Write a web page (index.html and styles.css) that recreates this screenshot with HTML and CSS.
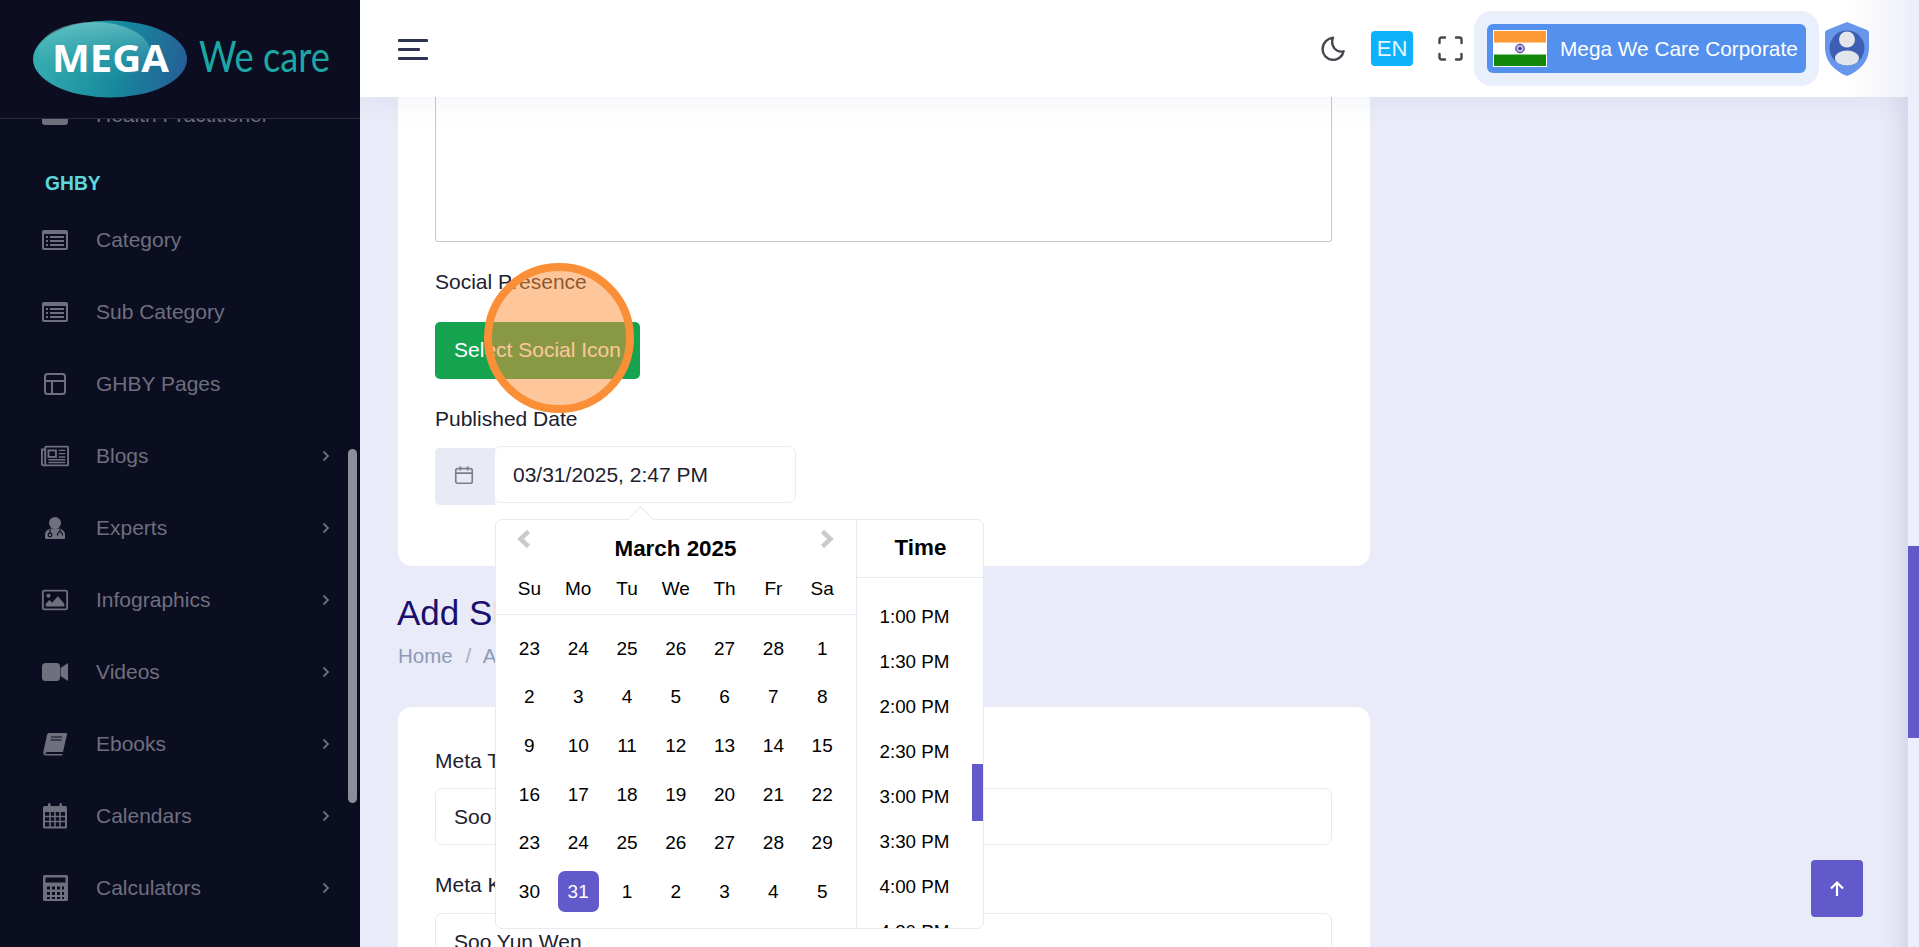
FILE: index.html
```html
<!DOCTYPE html>
<html lang="en">
<head>
<meta charset="utf-8">
<title>Mega We Care</title>
<link rel="stylesheet" href="styles.css">
</head>
<body>
<div class="shell">
  <aside class="sidebar">
    <div class="brand">
      <svg class="logo" viewBox="0 0 362 119" width="362" height="119">
        <defs>
          <linearGradient id="egg" x1="0" y1=".45" x2="1" y2=".55">
            <stop offset="0" stop-color="#35aeb1"/>
            <stop offset=".55" stop-color="#178a9d"/>
            <stop offset="1" stop-color="#255f97"/>
          </linearGradient>
          <linearGradient id="shine" x1="0" y1="0" x2="0" y2="1">
            <stop offset="0" stop-color="#79cdcc" stop-opacity=".7"/>
            <stop offset="1" stop-color="#2aa0ac" stop-opacity=".05"/>
          </linearGradient>
        </defs>
        <ellipse cx="110" cy="59" rx="77" ry="38.500" fill="url(#egg)"/>
        <ellipse cx="94" cy="52" rx="56" ry="30" fill="url(#shine)"/>
        <text x="52" y="72" class="logo-mega" textLength="117" lengthAdjust="spacingAndGlyphs">MEGA</text>
        <text x="199" y="72" class="logo-care" textLength="131" lengthAdjust="spacingAndGlyphs">We care</text>
      </svg>
    </div>
    <nav class="nav">
      <a class="nav-item"><span class="nav-icon"><svg viewBox="0 0 28 22" width="28" height="22"><rect x="1" y="2" width="26" height="19" rx="3" class="fill"/></svg></span>Health Practitioner</a>
      <div class="nav-heading">GHBY</div>
      <a class="nav-item"><span class="nav-icon"><svg viewBox="0 0 28 22" width="28" height="22"><rect x="1" y="1" width="26" height="20" rx="2" class="fill"/><rect x="3" y="5" width="22" height="14" class="cut"/><path d="M5 8h2M5 12h2M5 16h2M9 8h14M9 12h14M9 16h14" class="line"/></svg></span>Category</a>
      <a class="nav-item"><span class="nav-icon"><svg viewBox="0 0 28 22" width="28" height="22"><rect x="1" y="1" width="26" height="20" rx="2" class="fill"/><rect x="3" y="5" width="22" height="14" class="cut"/><path d="M5 8h2M5 12h2M5 16h2M9 8h14M9 12h14M9 16h14" class="line"/></svg></span>Sub Category</a>
      <a class="nav-item"><span class="nav-icon"><svg viewBox="0 0 28 24" width="28" height="24"><rect x="4" y="2" width="20" height="20" rx="2.500" class="outline"/><path d="M4 9h20M11 9v13" class="outline"/></svg></span>GHBY Pages</a>
      <a class="nav-item"><span class="nav-icon"><svg viewBox="0 0 30 22" width="30" height="22"><rect x="4.500" y="1" width="24.500" height="20" rx="1" class="outline"/><path d="M4.500 4H1v16l1 1h3" class="outline"/><rect x="8" y="5" width="8" height="7" class="outline"/><path d="M19 5h7M19 8.500h7M19 12h7M8 15h18M8 18h18" class="thin"/></svg></span>Blogs<svg class="chev" viewBox="0 0 8 12" width="8" height="12"><path d="M1.500 1.500 6 6l-4.500 4.500"/></svg></a>
      <a class="nav-item"><span class="nav-icon"><svg viewBox="0 0 28 24" width="28" height="24"><circle cx="14" cy="7" r="6" class="fill"/><path d="M4 22v-3c0-4 3-6 6-6.500h8c3 .5 6 2.500 6 6.500v3q0 1-1 1H5q-1 0-1-1Z" class="fill"/><circle cx="9" cy="19" r="1.800" class="dark-ring"/><path d="M9 13v4M19 13v2.500c2 .5 2.500 2 2.500 4M16.500 19.500c0-2 .5-3.500 2.500-4" class="dark-line"/></svg></span>Experts<svg class="chev" viewBox="0 0 8 12" width="8" height="12"><path d="M1.500 1.500 6 6l-4.500 4.500"/></svg></a>
      <a class="nav-item"><span class="nav-icon"><svg viewBox="0 0 30 24" width="30" height="24"><rect x="2" y="2" width="26" height="20" rx="1.500" class="outline"/><circle cx="8" cy="7.500" r="2.200" class="fill"/><path d="M5 19v-3l4-4 3 3 6-7 7 8v3Z" class="fill"/></svg></span>Infographics<svg class="chev" viewBox="0 0 8 12" width="8" height="12"><path d="M1.500 1.500 6 6l-4.500 4.500"/></svg></a>
      <a class="nav-item"><span class="nav-icon"><svg viewBox="0 0 28 20" width="28" height="20"><rect x="1" y="1" width="18" height="18" rx="3.500" class="fill"/><path d="M19.500 6 27 1v18l-7.500-5Z" class="fill"/></svg></span>Videos<svg class="chev" viewBox="0 0 8 12" width="8" height="12"><path d="M1.500 1.500 6 6l-4.500 4.500"/></svg></a>
      <a class="nav-item"><span class="nav-icon"><svg viewBox="0 0 28 24" width="28" height="24"><path d="M8 1h17q1.500 0 1 1.500L22 20H7q-3 0-2.500 2h17l-.4 1.500H5Q1.500 23.500 2.500 19L6 3q.4-2 2-2Z" class="fill"/><path d="M10 5h11M9.500 8h11" class="dark-line"/></svg></span>Ebooks<svg class="chev" viewBox="0 0 8 12" width="8" height="12"><path d="M1.500 1.500 6 6l-4.500 4.500"/></svg></a>
      <a class="nav-item"><span class="nav-icon"><svg viewBox="0 0 28 26" width="28" height="26"><rect x="2" y="3" width="24" height="22.500" rx="1.500" class="fill"/><rect x="7" y="0" width="2.500" height="6" rx="1.200" class="fill"/><rect x="18.500" y="0" width="2.500" height="6" rx="1.200" class="fill"/><path d="M4 9h20v14.500H4Z" class="cut"/><path d="M4 13.500h20M4 18.500h20M9 9v15M14 9v15M19 9v15" class="fill-line"/></svg></span>Calendars<svg class="chev" viewBox="0 0 8 12" width="8" height="12"><path d="M1.500 1.500 6 6l-4.500 4.500"/></svg></a>
      <a class="nav-item"><span class="nav-icon"><svg viewBox="0 0 28 26" width="28" height="26"><rect x="2" y="0" width="25" height="26" rx="1.500" class="fill"/><rect x="4.500" y="2.500" width="20" height="5" class="cut"/><path d="M6 11.500h3v3H6ZM11 11.500h3v3h-3ZM16 11.500h3v3h-3ZM21 11.500h2v3h-2ZM6 17h3v3H6ZM11 17h3v3h-3ZM16 17h3v3h-3ZM21 17h2v3h-2ZM6 22h3v2H6ZM11 22h3v2h-3ZM16 22h3v2h-3ZM21 22h2v2h-2Z" class="cut"/></svg></span>Calculators<svg class="chev" viewBox="0 0 8 12" width="8" height="12"><path d="M1.500 1.500 6 6l-4.500 4.500"/></svg></a>
    </nav>
    <div class="side-thumb"></div>
  </aside>

  <main class="main">
    <header class="topbar">
      <div class="burger"><span></span><span class="short"></span><span></span></div>
      <div class="tools">
        <svg class="tool-icon" viewBox="0 0 25 25" width="25" height="25"><path d="M12 1.600C7 2.400 1.600 6.500 1.600 13a10.600 10.600 0 0 0 21 2.300 9 9 0 0 1-10.800-6C10.900 6.700 11 4 12 1.600Z"/></svg>
        <span class="lang">EN</span>
        <svg class="tool-icon screen" viewBox="0 0 25 25" width="25" height="25"><path d="M1.500 7V3.500a2 2 0 0 1 2-2H7M18 1.500h3.500a2 2 0 0 1 2 2V7M23.500 18v3.500a2 2 0 0 1-2 2H18M7 23.500H3.500a2 2 0 0 1-2-2V18"/></svg>
        <div class="org-pill">
          <div class="org-btn">
            <svg class="flag" viewBox="0 0 54 37" width="54" height="37"><rect width="54" height="37" fill="#fff"/><rect x="1" y="1" width="52" height="11.500" fill="#ff9933"/><rect x="1" y="24.500" width="52" height="11.500" fill="#138808"/><circle cx="27" cy="18.500" r="4.300" fill="#b9b6e3" stroke="#2e2a80" stroke-width="1"/><circle cx="27" cy="18.500" r="1.500" fill="#2e2a80"/></svg>
            <span>Mega We Care Corporate</span>
          </div>
        </div>
        <svg class="shield" viewBox="0 0 44 54" width="44" height="54"><path d="M22 0 42 8c2 1 2 2 2 4v14c0 13-9 23-22 28C9 49 0 39 0 26V12c0-2 0-3 2-4Z" fill="#6797ec"/><circle cx="22" cy="26" r="17.500" fill="#3e5eb3"/><circle cx="22" cy="17.500" r="8" fill="#e2e5ea"/><ellipse cx="22" cy="36" rx="12" ry="7.500" fill="#e2e5ea"/></svg>
      </div>
    </header>

    <div class="content">
      <section class="card card-top">
        <div class="textarea"></div>
        <label class="label label-social">Social Presence</label>
        <button class="btn-green">Select Social Icon</button>
        <label class="label label-date">Published Date</label>
        <div class="date-group">
          <span class="addon"><svg viewBox="0 0 24 24" width="22" height="22"><rect x="3" y="5" width="18" height="16" rx="2"/><path d="M8 2.500V7M16 2.500V7M3 10h18"/></svg></span>
          <span class="date-input">03/31/2025, 2:47 PM</span>
        </div>
      </section>

      <h1 class="page-title">Add SEO</h1>
      <div class="crumbs">Home <span class="sep">/</span> Add SEO</div>

      <section class="card card-meta">
        <label class="label">Meta Title</label>
        <div class="field">Soo Yun Wen</div>
        <label class="label label-next">Meta Keywords</label>
        <div class="field field-next">Soo Yun Wen</div>
      </section>
    </div>

    <div class="picker">
      <div class="picker-arrow"></div>
      <div class="month">
        <div class="month-head">
          <svg class="arrow" viewBox="0 0 15 20" width="15" height="20"><path d="M12.500 2.500 4.500 10l8 7.500"/></svg>
          <span>March 2025</span>
          <svg class="arrow" viewBox="0 0 15 20" width="15" height="20"><path d="M2.500 2.500 10.500 10l-8 7.500"/></svg>
        </div>
        <div class="week-names"><span>Su</span><span>Mo</span><span>Tu</span><span>We</span><span>Th</span><span>Fr</span><span>Sa</span></div>
        <div class="days">
          <span>23</span><span>24</span><span>25</span><span>26</span><span>27</span><span>28</span><span>1</span>
          <span>2</span><span>3</span><span>4</span><span>5</span><span>6</span><span>7</span><span>8</span>
          <span>9</span><span>10</span><span>11</span><span>12</span><span>13</span><span>14</span><span>15</span>
          <span>16</span><span>17</span><span>18</span><span>19</span><span>20</span><span>21</span><span>22</span>
          <span>23</span><span>24</span><span>25</span><span>26</span><span>27</span><span>28</span><span>29</span>
          <span>30</span><span class="sel"><b>31</b></span><span>1</span><span>2</span><span>3</span><span>4</span><span>5</span>
        </div>
      </div>
      <div class="time">
        <div class="time-head">Time</div>
        <div class="time-body">
          <div class="time-list">
            <span>1:00 PM</span><span>1:30 PM</span><span>2:00 PM</span><span>2:30 PM</span><span>3:00 PM</span><span>3:30 PM</span><span>4:00 PM</span><span>4:30 PM</span>
          </div>
          <div class="time-track"><div class="time-thumb"></div></div>
        </div>
      </div>
    </div>

    <div class="click-ring"></div>
    <a class="to-top"><svg viewBox="0 0 20 20" width="20" height="20"><path d="M10 17V4M4 9.500 10 3.500l6 6"/></svg></a>
  </main>

  <div class="page-track"><div class="page-thumb"></div></div>
</div>
</body>
</html>
```
FILE: styles.css
```css
* { box-sizing: border-box; }
html, body { margin: 0; height: 100%; overflow: hidden; }
body { font-family: "Liberation Sans", Arial, sans-serif; color: #1d212f; background: #e9ebf8; }
.shell { display: grid; grid-template-columns: 360px 1fr 11px; height: 100vh; }

/* sidebar */
.sidebar { position: relative; background: #0b0d21; overflow: hidden; color: #6f6f7e; }
.brand { position: absolute; top: 0; left: 0; z-index: 2; width: 362px; height: 119px; background: #0c0d20; border-bottom: 1px solid #2b2c3c; }
.logo { display: block; }
.logo-mega { font-family: "Open Sans", sans-serif; font-weight: 700; font-size: 37px; fill: #fff; }
.logo-care { font-family: Lato, sans-serif; font-weight: 400; font-size: 42px; fill: #1ba8a4; }
.nav { padding-top: 79px; }
.nav-item { display: flex; align-items: center; height: 72px; padding: 0 30px 0 41px; font-size: 21px; color: #6f6f7e; }
.nav-icon { display: flex; justify-content: center; width: 28px; margin-right: 27px; flex: none; }
.nav-heading { padding: 21px 0 8px 45px; font-size: 19.300px; line-height: 24px; font-weight: 700; color: #5cd8dc; }
.chev { margin-left: auto; fill: none; stroke: #6f6f7e; stroke-width: 1.800; }
.fill { fill: #6f6f7e; }
.cut { fill: #0b0d21; }
.line { stroke: #6f6f7e; stroke-width: 2; fill: none; }
.fill-line { stroke: #6f6f7e; stroke-width: 1.500; fill: none; }
.outline { stroke: #6f6f7e; stroke-width: 2; fill: none; }
.thin { stroke: #6f6f7e; stroke-width: 1.500; fill: none; }
.dark-line { stroke: #0b0d21; stroke-width: 1.200; fill: none; }
.dark-ring { stroke: #0b0d21; stroke-width: 1.200; fill: none; }
.side-thumb { position: absolute; left: 348px; top: 449px; width: 9px; height: 354px; border-radius: 5px; background: #8d8d97; }

/* main */
.main { position: relative; overflow: hidden; background: #e9ebf8; box-shadow: inset -22px 0 18px -14px rgba(60, 65, 120, .12); }
.topbar { position: relative; z-index: 1; display: flex; align-items: center; height: 97px; padding: 0 39px 0 38px; background: linear-gradient(90deg, #fff 96%, #f0f1f8 100%); box-shadow: 0 6px 26px rgba(90, 95, 150, .07); }
.burger { display: flex; flex-direction: column; gap: 6px; width: 30px; margin-top: 1px; }
.burger span { display: block; height: 3px; background: #2d3352; border-radius: 1px; }
.burger .short { width: 22px; }
.tools { display: flex; align-items: center; margin-left: auto; }
.tool-icon { fill: none; stroke: #45454d; stroke-width: 2.400; stroke-linecap: round; stroke-linejoin: round; }
.tool-icon.screen { stroke-width: 2.400; margin-right: 11px; }
.lang { display: flex; align-items: center; justify-content: center; width: 42px; height: 35px; margin: 0 25px; border-radius: 4px; background: #0db2fb; color: #e4f6ff; font-size: 22px; }
.org-pill { display: flex; align-items: center; justify-content: center; width: 345px; height: 75px; border-radius: 18px; background: #eaf0fb; }
.org-btn { display: flex; align-items: center; gap: 13px; width: 319px; height: 49px; padding-left: 6px; border-radius: 6px; background: #5490ee; color: #fff; font-size: 20.800px; white-space: nowrap; }
.flag { flex: none; }
.shield { margin-left: 6px; flex: none; }

/* content */
.content { width: 972px; margin-left: 38px; }
.card { background: #fff; border-radius: 14px; padding-left: 37px; padding-right: 38px; }
.card-top { height: 469px; border-radius: 0 0 14px 14px; }
.textarea { height: 145px; border: 1px solid #c6c8cf; border-top: 0; border-radius: 0 0 3px 3px; }
.label { display: block; font-size: 21px; line-height: 24px; color: #1d212f; }
.label-social { margin-top: 28px; }
.btn-green { display: block; width: 205px; height: 57px; margin-top: 28px; padding: 0 0 2px; border: 0; border-radius: 5px; background: #16a34f; color: #fff; font: 21px "Liberation Sans", Arial, sans-serif; }
.label-date { margin-top: 28px; }
.date-group { display: flex; align-items: flex-start; margin-top: 15px; }
.addon { display: flex; align-items: center; justify-content: center; width: 60px; height: 57px; margin-top: 2px; padding: 0 2px 4px 0; border-radius: 5px 0 0 5px; background: #e8eaf6; }
.addon svg { fill: none; stroke: #7d7e8c; stroke-width: 1.800; }
.date-input { display: flex; align-items: center; width: 302px; height: 57px; margin-left: -1px; padding-left: 18px; border: 1px solid #eaebf5; border-radius: 7px; background: #fff; font-size: 21px; }
.page-title { margin: 26px 0 0 -1px; font-size: 35px; line-height: 42px; font-weight: 400; color: #1a0f6e; }
.crumbs { margin-top: 10px; font-size: 20.500px; line-height: 24px; color: #8e9ab8; }
.sep { margin: 0 7px; color: #a6afc8; }
.card-meta { height: 400px; margin-top: 39px; padding-top: 42px; }
.field { display: flex; align-items: center; height: 57px; margin-top: 15px; padding-left: 18px; border: 1px solid #e8e9f2; border-radius: 7px; font-size: 21px; }
.label-next { margin-top: 28px; }
.field-next { margin-top: 16px; }

/* date picker */
.picker { position: absolute; left: 135px; top: 519px; z-index: 2; display: flex; width: 489px; height: 410px; border: 1px solid #e8e9f2; border-radius: 7px; background: #fff; color: #000; }
.picker-arrow { position: absolute; left: 135px; top: -10px; width: 19px; height: 19px; transform: rotate(45deg); background: #fff; border-left: 1px solid #e8e9f2; border-top: 1px solid #e8e9f2; }
.month { position: relative; width: 361px; flex: none; border-right: 1px solid #e8e9f2; }
.month-head { display: flex; justify-content: space-between; align-items: flex-start; height: 51px; padding: 9px 21px 0 20px; font-size: 22.400px; font-weight: 700; }
.month-head span { line-height: 40px; }
.arrow { fill: none; stroke: #cbcbcb; stroke-width: 4.500; }
.week-names, .days { display: grid; grid-template-columns: repeat(7, 48.800px); padding-left: 9px; text-align: center; font-size: 19px; }
.week-names { height: 44px; line-height: 36px; border-bottom: 1px solid #e8e9f2; }
.days { row-gap: 7.700px; padding-top: 13px; }
.days span { display: flex; align-items: center; justify-content: center; height: 41px; }
.days .sel b { display: flex; align-items: center; justify-content: center; width: 41px; height: 41px; border-radius: 7px; background: #6259ca; color: #fff; font-weight: 400; }
.time { display: flex; flex-direction: column; flex: 1; min-width: 0; }
.time-head { height: 58px; padding-left: 1px; line-height: 56px; text-align: center; font-size: 22.400px; font-weight: 700; border-bottom: 1px solid #e8e9f2; flex: none; }
.time-body { display: flex; flex: 1; min-height: 0; overflow: hidden; }
.time-list { display: flex; flex-direction: column; flex: 1; padding-top: 16px; font-size: 18.800px; text-align: center; }
.time-list span { display: block; flex: none; height: 45px; line-height: 45px; }
.time-track { width: 12px; flex: none; margin-right: -1px; }
.time-thumb { width: 12px; height: 57px; margin-top: 186px; background: #6259ca; }

/* overlays */
.click-ring { position: absolute; left: 124px; top: 263px; z-index: 3; width: 150px; height: 150px; border: 8px solid #fb8f37; border-radius: 50%; background: rgba(251, 143, 55, .5); }
.to-top { position: absolute; left: 1451px; top: 860px; z-index: 2; display: flex; align-items: center; justify-content: center; width: 52px; height: 57px; border-radius: 4px; background: #6259ca; }
.to-top svg { fill: none; stroke: #fff; stroke-width: 2.200; }

.page-track { background: #eceefa; }
.page-thumb { height: 192px; margin-top: 546px; background: #6259ca; }
```
